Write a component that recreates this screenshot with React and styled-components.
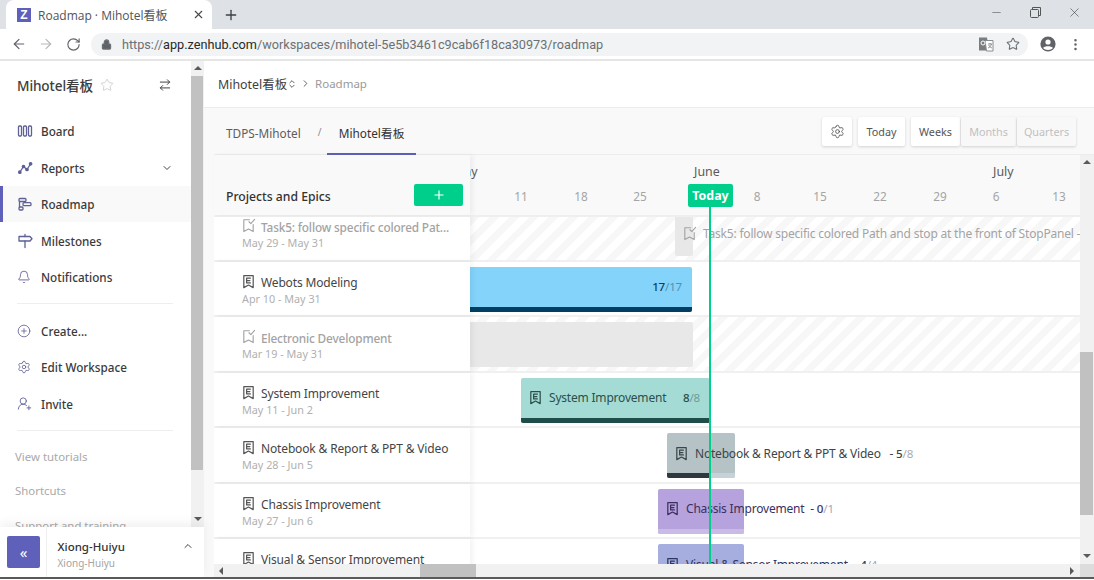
import React from "react";
import styled, { createGlobalStyle } from "styled-components";
import {
  ArrowLeft, ArrowRight, RotateCw, Lock, Star, MoreVertical, Plus, X, Settings,
  ChevronDown, ChevronUp, ChevronRight, ChevronsUpDown, ArrowRightLeft, Bell, CirclePlus,
  UserRoundPlus, Minus,
} from "lucide-react";

const SANS = `"Noto Sans", "Noto Sans CJK SC", sans-serif`;
const ACCENT = "#5e60ba";
const GREEN = "#00cf8c";

const Global = createGlobalStyle`
  html, body { margin: 0; padding: 0; background: #fff; }
  * { box-sizing: border-box; }
  body { font-family: ${SANS}; }
`;

const Win = styled.div`
  width: 1094px; height: 580px; display: flex; flex-direction: column; overflow: hidden; background: #fff;
`;

/* ---------- browser chrome ---------- */
const TabStrip = styled.div`
  height: 29px; flex: none; background: #dee1e6; display: flex; align-items: flex-end; padding-left: 6px;
`;
const BrowserTab = styled.div`
  width: 206px; height: 29px; background: #fff; border-radius: 8px 8px 0 0; display: flex; align-items: center;
  padding: 0 7px 0 11px; font: 12px "Open Sans", "Noto Sans CJK SC", sans-serif; color: #50545a;
`;
const Favicon = styled.span`
  width: 14px; height: 14px; background: ${ACCENT}; color: #fff; font: bold 12px/14px "Liberation Sans", sans-serif;
  text-align: center; margin-right: 7px; flex: none;
`;
const TabTitle = styled.span` flex: 1; white-space: nowrap; `;
const NewTab = styled.span` margin: 0 0 0 11px; height: 29px; display: flex; align-items: center; color: #3c4043; `;
const WinControls = styled.div`
  margin-left: auto; height: 29px; display: flex; align-items: center; color: #555; padding-bottom: 5px;
`;
const WinButton = styled.span`
  width: 39px; display: flex; justify-content: center;
`;
const Toolbar = styled.div`
  height: 32px; flex: none; background: #fff; border-bottom: 2px solid #e6e6e6; display: flex; align-items: center;
  padding: 0 10px 0 11px; color: #5f6368;
`;
const ToolButton = styled.span`
  width: 27.3px; display: flex; justify-content: flex-start; color: ${p => (p.$off ? "#b5b7ba" : "#5f6368")};
`;
const Omnibox = styled.div`
  width: 937px; height: 23px; margin-left: -2px; border-radius: 12px; background: #f1f3f4; display: flex; align-items: center;
  padding: 0 8px 0 10px; font: 12.7px Roboto, sans-serif; color: #6c7074; white-space: nowrap;
`;
const LockWrap = styled.span` display: flex; margin-left: 0; `;
const Host = styled.span` color: #26282b; `;
const Url = styled.span` flex: 1; margin-left: 10px; overflow: hidden; `;
const OmniIcon = styled.span` display: flex; margin-left: ${p => p.$gap || 0}px; `;
const Account = styled.span` margin-left: 12px; display: flex; color: #5f6368; `;
const Menu = styled.span` margin-left: 12px; display: flex; `;

/* ---------- body ---------- */
const Body = styled.div` flex: 1; min-height: 0; display: flex; `;
const Sidebar = styled.aside` width: 204px; flex: none; display: flex; flex-direction: column; position: relative; `;
const SideTop = styled.div` height: 466px; display: flex; `;
const SideScroll = styled.div` width: 191px; overflow: hidden; background: #fff; `;
const SideHead = styled.div`
  height: 52.2px; display: flex; align-items: center; padding: 0 19px 5px 17px; color: #3a3a3a;
`;
const WorkspaceName = styled.div` font-size: 13.6px; font-weight: 500; letter-spacing: -.1px; color: #3d3d3d; white-space: nowrap; `;
const StarWrap = styled.span` margin-left: 7px; display: flex; color: #c9c9c9; `;
const Swap = styled.span` margin-left: auto; display: flex; color: #444; `;
const NavItem = styled.div`
  height: 36.4px; display: flex; align-items: center; padding: 0 18px 0 14px; font-size: 11.7px; font-weight: 500; color: #3a3a3a;
  background: ${p => (p.$active ? "#f9f9f9" : "transparent")};
  border-left: 3px solid ${p => (p.$active ? ACCENT : "transparent")};
`;
const NavIcon = styled.span` width: 24px; flex: none; display: flex; color: #5e6096; `;
const NavChevron = styled.span` margin-left: auto; display: flex; color: #444; `;
const NavRule = styled.hr`
  border: 0; height: 1px; background: #eeeeee; margin: 8px 18px 8.5px 17px;
`;
const HelpRule = styled(NavRule)` margin-bottom: 8px; `;
const HelpLink = styled.div`
  height: 34.5px; display: flex; align-items: center; padding-left: 15px; font-size: 11.4px; color: #a9a9a9; white-space: nowrap;
`;
const Scrollbar = styled.div`
  width: ${p => p.$w || 13}px; flex: none; background: #f1f1f1; position: relative;
`;
const VThumb = styled.div`
  position: absolute; left: 0; right: ${p => p.$right || 0}px; top: ${p => p.$top}px; height: ${p => p.$h}px; background: #c1c1c1;
`;
const Arrow = styled.span`
  position: absolute; width: 0; height: 0;
  ${p => p.$dir === "up" && `border: 4px solid transparent; border-top: 0; border-bottom: 4px solid #5a5a5a; left: 2.5px; top: ${p.$at}px;`}
  ${p => p.$dir === "down" && `border: 4px solid transparent; border-bottom: 0; border-top: 4px solid #5a5a5a; left: 2.5px; top: ${p.$at}px;`}
  ${p => p.$dir === "left" && `border: 4px solid transparent; border-left: 0; border-right: 4px solid #5a5a5a; top: 2.5px; left: ${p.$at}px;`}
  ${p => p.$dir === "right" && `border: 4px solid transparent; border-right: 0; border-left: 4px solid #5a5a5a; top: 2.5px; left: ${p.$at}px;`}
`;
const UserBar = styled.div`
  height: 50px; background: #fff; display: flex; align-items: center; box-shadow: 0 -4px 10px rgba(0,0,0,.06); position: relative;
`;
const Collapse = styled.button`
  width: 33px; height: 32px; margin-left: 7px; border: 0; padding: 0; background: ${ACCENT}; color: #fff; border-radius: 2px;
  display: flex; align-items: center; justify-content: center; font: 15px/1 "Noto Sans", sans-serif;
`;
const UserInfo = styled.div`
  flex: 1; height: 50px; margin-left: 6px; padding: 11px 10px 0 10.5px; border-left: 1px solid #f0f0f0; display: flex;
`;
const UserName = styled.div` font-size: 11.5px; line-height: 18px; color: #333; font-weight: 500; `;
const UserSub = styled.div` font-size: 10px; line-height: 15px; color: #a5a5a5; `;
const UserChevron = styled.span` margin-left: auto; display: flex; color: #444; height: 12px; margin-top: 2px; `;

const Main = styled.main` flex: 1; min-width: 0; display: flex; flex-direction: column; background: #f9f9f9; `;
const Crumbs = styled.div`
  height: 47px; flex: none; background: #fff; border-bottom: 1px solid #ececec; display: flex; align-items: center; padding: 0 14px 1px;
  font-size: 12.4px; color: #3e3e3e;
`;
const CrumbMuted = styled.span` color: #9a9a9a; margin-left: 4px; font-size: 11.5px; `;
const CrumbIcon = styled.span` display: flex; color: #444; margin-left: ${p => p.$gap || 0}px; `;
const TabsBar = styled.div`
  height: 47px; flex: none; margin-left: 10px; display: flex; align-items: stretch; padding: 0 18px 0 12px; background: #f9f9f9;
  border-bottom: 1px solid #ececec;
`;
const ProjectTab = styled.div`
  display: flex; align-items: center; font-size: 11.8px; padding: 4px 0 0; white-space: nowrap; color: ${p => (p.$active ? "#333" : "#5c5c5c")};
  ${p => p.$active && `border-bottom: 2px solid ${ACCENT}; margin-bottom: -1px; padding: 4px 12px 0;`}
`;
const Slash = styled.span` align-self: center; width: 26px; padding: 2px 0 0 12px; text-align: center; color: #8a8a8a; font-size: 10px; `;
const TabTools = styled.div` margin-left: auto; display: flex; align-items: center; gap: 6px; `;
const ToolBtn = styled.button`
  height: 29px; width: ${p => p.$w}px; padding: 0; border: 0; border-radius: 2px; background: ${p => (p.$dim ? "#f8f8f8" : "#fff")};
  color: ${p => (p.$dim ? "#c0c0c0" : "#555")}; font: 10.8px ${SANS}; display: flex; align-items: center; justify-content: center;
  box-shadow: 0 1px 3px rgba(0,0,0,.16);
`;
const Segment = styled.div` display: flex; gap: 1px; `;

/* ---------- gantt ---------- */
const Gantt = styled.div` flex: 1; min-height: 0; margin-left: 10px; display: flex; `;
const Pane = styled.div` width: 866px; flex: none; display: flex; flex-direction: column; position: relative; `;
const GanttHead = styled.div` height: 62px; flex: none; display: flex; border-bottom: 2px solid #efefef; `;
const HeadLeft = styled.div`
  width: 256px; flex: none; display: flex; align-items: center; justify-content: space-between; padding: 23px 7px 0 12px;
  background: #f9f9f9; position: relative; z-index: 2; box-shadow: 3px 0 5px rgba(0,0,0,.05);
`;
const HeadTitle = styled.div` font-size: 12.2px; font-weight: 500; color: #333; `;
const AddBtn = styled.button`
  width: 49px; height: 22px; border: 0; border-radius: 2px; background: ${GREEN}; color: #fff; padding: 0;
  display: flex; align-items: center; justify-content: center; margin-top: -4px;
`;
const Axis = styled.div` flex: 1; position: relative; overflow: hidden; `;
const Month = styled.span`
  position: absolute; top: 8px; left: ${p => p.$x}px; font-size: 12.4px; color: #595959; line-height: 18px;
`;
const Day = styled.span`
  position: absolute; top: 32px; left: ${p => p.$x}px; transform: translateX(-50%); font-size: 11.8px; color: #a5a5a5; line-height: 18px;
`;
const RowsClip = styled.div` flex: 1; min-height: 0; overflow: hidden; `;
const Rows = styled.div` margin-top: -11px; `;
const Row = styled.div`
  height: 55.5px; display: flex; border-bottom: 2px solid #f0f0f0; background: #fff;
`;
const RowInfo = styled.div`
  width: 256px; flex: none; padding: 12px 0 0 28px; background: #fff; position: relative; z-index: 2; box-shadow: 3px 0 5px rgba(0,0,0,.05);
`;
const RowTitle = styled.div`
  display: flex; align-items: center; line-height: 18px; white-space: nowrap;
  font-size: ${p => (p.$closed ? "11.8px" : "12px")}; letter-spacing: -.15px;
  color: ${p => (p.$closed ? "#a3a3a3" : "#454545")}; font-weight: ${p => (p.$closed ? 500 : 400)};
`;
const RowIcon = styled.span` width: 20px; margin-left: -1px; flex: none; display: flex; color: ${p => (p.$closed ? "#a3a3a3" : "#555")}; margin-top: -3px; `;
const RowDate = styled.div` margin: -1px 0 0 0; font-size: 10.8px; line-height: 15px; color: #b0b0b0; `;
const Lane = styled.div`
  flex: 1; position: relative; overflow: hidden;
  ${p => p.$hatched && `background: repeating-linear-gradient(-45deg, #fff 0 7px, #f7f7f7 7px 14px);`}
`;
const Bar = styled.div`
  position: absolute; left: ${p => p.$x}px; width: ${p => p.$w}px; top: 5px; height: 45px; border-radius: 2px;
  background: ${p => p.$bg}; color: ${p => p.$fg}; display: flex; align-items: center;
  padding: 0 ${p => (p.$tail ? 10 : 0)}px ${p => (p.$track ? 5 : 0)}px 10px;
  font-size: 12px; letter-spacing: -.2px; white-space: nowrap;
`;
const BarIcon = styled.span` width: 18px; flex: none; display: flex; margin-left: -3px; & + * { margin-left: 3px; } `;
const BarCount = styled.span` ${p => p.$right && "margin-left: auto;"} font-size: 11.6px; font-weight: 500; white-space: pre; `;
const Of = styled.span` opacity: .45; font-weight: 400; `;
const BarLabel = styled.span` white-space: pre; `;
const Progress = styled.div`
  position: absolute; left: 0; right: 0; bottom: 0; height: 5px; background: ${p => p.$track}; border-radius: 0 0 2px 2px; overflow: hidden;
`;
const ProgressFill = styled.div` height: 100%; background: ${p => p.$fill}; `;
const TodayMark = styled.div`
  position: absolute; left: 495px; top: 52px; bottom: 13px; width: 2px; background: ${GREEN}; z-index: 3;
`;
const TodayChip = styled.div`
  position: absolute; left: -21px; top: -23px; width: 45px; height: 23px; background: ${GREEN}; color: #fff; border-radius: 2px;
  font-size: 12.4px; font-weight: 700; line-height: 23px; text-align: center;
`;
const HScroll = styled.div` height: 13px; flex: none; background: #f1f1f1; position: relative; z-index: 4; `;
const HThumb = styled.div` position: absolute; top: 0; bottom: 0; left: 206px; width: 56px; background: #c1c1c1; `;
const RightBar = styled.div` width: 14px; flex: none; display: flex; flex-direction: column; `;
const RightTrack = styled(Scrollbar)` width: 14px; flex: 1; `;
const Corner = styled.div` height: 13px; flex: none; background: #dcdcdc; `;
const BottomEdge = styled.div` height: 3px; flex: none; background: #fff; border-top: 2px solid #5a5a5a; `;

/* ---------- drawn icons ---------- */
const Svg = ({ size = 16, children, w = 1.3 }) => (
  <svg width={size} height={size} viewBox="0 0 16 16" fill="none" stroke="currentColor" strokeWidth={w} strokeLinecap="round" strokeLinejoin="round">
    {children}
  </svg>
);
const BoardIcon = () => (
  <Svg><rect x="1.5" y="3" width="3" height="10" rx="1" /><rect x="6.5" y="3" width="3" height="10" rx="1" /><rect x="11.5" y="3" width="3" height="10" rx="1" /></Svg>
);
const ReportsIcon = () => (
  <Svg>
    <path d="M3 12 L6.5 6.5 L10 9.5 L13.5 4" />
    <circle cx="2.8" cy="12.2" r="1.2" fill="currentColor" /><circle cx="6.5" cy="6.5" r="1.2" fill="currentColor" />
    <circle cx="10" cy="9.5" r="1.2" fill="currentColor" /><circle cx="13.6" cy="3.8" r="1.2" fill="currentColor" />
  </Svg>
);
const RoadmapIcon = () => (
  <Svg>
    <rect x="2" y="2.5" width="7" height="3" rx="1" /><rect x="6" y="6.7" width="8" height="3" rx="1" /><rect x="2" y="11" width="4" height="3" rx="1" />
    <path d="M2.5 5.5 V11" />
  </Svg>
);
const MilestoneIcon = () => (
  <Svg><path d="M2 3.5 H13 L15 5.7 L13 8 H2 Z" /><path d="M8 1.5 V3.5 M8 8 V14.5" /></Svg>
);
const BellIcon = () => <Bell size={14} strokeWidth={1.5} />;
const EpicIcon = ({ size = 15 }) => (
  <Svg size={size} w={1.3}>
    <path d="M3 1.8 H13 V14.5 L8 11.8 L3 14.5 Z" />
    <path d="M6 4.5 H10 M6 7 H9.5 M6 9.5 H10 M6 4.5 V9.5" />
  </Svg>
);
const ClosedEpicIcon = ({ size = 15 }) => (
  <Svg size={size} w={1.2}>
    <path d="M9 1.8 H3 V14.5 L8 11.8 L13 14.5 V7" />
    <path d="M8.5 4 L10.5 6 L14.5 1.5" />
  </Svg>
);
const TranslateIcon = () => (
  <svg width="16" height="16" viewBox="0 0 16 16">
    <path d="M1 1.5 H9 L11 14.5 H1 Z" fill="#7a7d80" />
    <path d="M7 4.5 H15 V15 H8.5 Z" fill="#fff" stroke="#8a8d90" />
    <circle cx="5" cy="7" r="2" fill="none" stroke="#fff" strokeWidth="1" />
    <path d="M10 8 H14 M12 7 V8 M13.5 8 C13 10 11.5 11.5 10 12 M10.8 9 C11.5 10.5 12.5 11.5 14 12" stroke="#777" strokeWidth=".8" fill="none" />
  </svg>
);
const AccountIcon = () => (
  <svg width="16" height="16" viewBox="0 0 16 16">
    <circle cx="8" cy="8" r="7.6" fill="#5f6368" />
    <circle cx="8" cy="6" r="2.6" fill="#fff" />
    <path d="M3 12 C4.5 9.8 11.5 9.8 13 12 C11 14.6 5 14.6 3 12 Z" fill="#fff" />
  </svg>
);
const RestoreIcon = () => (
  <svg width="11" height="11" viewBox="0 0 11 11" fill="none" stroke="#555" strokeWidth="1">
    <rect x=".5" y="2.5" width="8" height="8" rx="1" /><path d="M2.5 2.5 V.5 H10.5 V8.5 H8.5" />
  </svg>
);

const nav = [
  { label: "Board", icon: <BoardIcon /> },
  { label: "Reports", icon: <ReportsIcon />, chevron: true },
  { label: "Roadmap", icon: <RoadmapIcon />, active: true },
  { label: "Milestones", icon: <MilestoneIcon /> },
  { label: "Notifications", icon: <BellIcon /> },
];
const nav2 = [
  { label: "Create...", icon: <CirclePlus size={14} strokeWidth={1.4} /> },
  { label: "Edit Workspace", icon: <Settings size={14} strokeWidth={1.4} /> },
  { label: "Invite", icon: <UserRoundPlus size={15} strokeWidth={1.4} /> },
];

const months = [{ t: "May", x: -17 }, { t: "June", x: 224 }, { t: "July", x: 523 }];
const days = [["11", 51], ["18", 111], ["25", 170], ["8", 287], ["15", 350], ["22", 410], ["29", 470], ["6", 526], ["13", 589]];

const rows = [
  { title: "Task5: follow specific colored Pat...", date: "May 29 - May 31", closed: true, hatched: true,
    bar: { x: 205, w: 18, bg: "#e8e8e8", fg: "#a3a3a3", label: "Task5: follow specific colored Path and stop at the front of StopPanel - 2/2", icon: true } },
  { title: "Webots Modeling", date: "Apr 10 - May 31",
    bar: { x: -20, w: 242, bg: "#83d3fb", fg: "#123f58", count: [17, 17], right: true, tail: true, track: "#003f63", pct: 100 } },
  { title: "Electronic Development", date: "Mar 19 - May 31", closed: true, hatched: true,
    bar: { x: -20, w: 243, bg: "#e8e8e8", fg: "#999" } },
  { title: "System Improvement", date: "May 11 - Jun 2",
    bar: { x: 51, w: 189, bg: "#a4dcd5", fg: "#2c4f4b", label: "System Improvement", icon: true, count: [8, 8], right: true, tail: true, track: "#1f4d48", pct: 100 } },
  { title: "Notebook & Report & PPT & Video", date: "May 28 - Jun 5",
    bar: { x: 197, w: 68, bg: "#b5c3c7", fg: "#3b454a", label: "Notebook & Report & PPT & Video   - ", icon: true, count: [5, 8], track: "#c6d2d6", fill: "#2c3a40", pct: 63 } },
  { title: "Chassis Improvement", date: "May 27 - Jun 6",
    bar: { x: 188, w: 86, bg: "#b6a2dd", fg: "#3c2f5e", label: "Chassis Improvement  - ", icon: true, count: [0, 1], track: "#cabbe6", pct: 0 } },
  { title: "Visual & Sensor Improvement", date: "May 27 - Jun 6",
    bar: { x: 188, w: 86, bg: "#a5aede", fg: "#2f3560", label: "Visual & Sensor Improvement  - ", icon: true, count: [4, 4], track: "#c0c7e9", pct: 100, fill: "#2f3560" } },
];

export default function App() {
  return (
    <Win>
      <Global />
      <TabStrip>
        <BrowserTab>
          <Favicon>Z</Favicon>
          <TabTitle>Roadmap · Mihotel看板</TabTitle>
          <X size={13} strokeWidth={2} color="#45484c" />
        </BrowserTab>
        <NewTab><Plus size={16} strokeWidth={2} /></NewTab>
        <WinControls>
          <WinButton><Minus size={13} strokeWidth={1} color="#444" /></WinButton>
          <WinButton><RestoreIcon /></WinButton>
          <WinButton><X size={15} strokeWidth={1} color="#444" /></WinButton>
        </WinControls>
      </TabStrip>
      <Toolbar>
        <ToolButton><ArrowLeft size={16} strokeWidth={1.8} /></ToolButton>
        <ToolButton $off><ArrowRight size={16} strokeWidth={1.8} /></ToolButton>
        <ToolButton><RotateCw size={15} strokeWidth={1.8} /></ToolButton>
        <Omnibox>
          <LockWrap><Lock size={11} strokeWidth={2.4} fill="#5f6368" /></LockWrap>
          <Url>https://<Host>app.zenhub.com</Host>/workspaces/mihotel-5e5b3461c9cab6f18ca30973/roadmap</Url>
          <OmniIcon><TranslateIcon /></OmniIcon>
          <OmniIcon $gap={12}><Star size={14} strokeWidth={1.8} /></OmniIcon>
        </Omnibox>
        <Account><AccountIcon /></Account>
        <Menu><MoreVertical size={15} strokeWidth={2} /></Menu>
      </Toolbar>
      <Body>
        <Sidebar>
          <SideTop>
            <SideScroll>
              <SideHead>
                <WorkspaceName>Mihotel看板</WorkspaceName>
                <StarWrap><Star size={14} strokeWidth={1.4} /></StarWrap>
                <Swap><ArrowRightLeft size={14} strokeWidth={1.7} /></Swap>
              </SideHead>
              {nav.map(n => (
                <NavItem key={n.label} $active={n.active}>
                  <NavIcon>{n.icon}</NavIcon>{n.label}
                  {n.chevron && <NavChevron><ChevronDown size={12} strokeWidth={2} /></NavChevron>}
                </NavItem>
              ))}
              <NavRule />
              {nav2.map(n => (
                <NavItem key={n.label}><NavIcon>{n.icon}</NavIcon>{n.label}</NavItem>
              ))}
              <HelpRule />
              <HelpLink>View tutorials</HelpLink>
              <HelpLink>Shortcuts</HelpLink>
              <HelpLink>Support and training</HelpLink>
            </SideScroll>
            <Scrollbar>
              <Arrow $dir="up" $at={5} />
              <VThumb $top={15} $h={394} $right={1} />
              <Arrow $dir="down" $at={456} />
            </Scrollbar>
          </SideTop>
          <UserBar>
            <Collapse>«</Collapse>
            <UserInfo>
              <div>
                <UserName>Xiong-Huiyu</UserName>
                <UserSub>Xiong-Huiyu</UserSub>
              </div>
              <UserChevron><ChevronUp size={12} strokeWidth={2} /></UserChevron>
            </UserInfo>
          </UserBar>
        </Sidebar>
        <Main>
          <Crumbs>
            Mihotel看板
            <CrumbIcon><ChevronsUpDown size={10} strokeWidth={2} /></CrumbIcon>
            <CrumbIcon $gap={3}><ChevronRight size={11} strokeWidth={1.8} /></CrumbIcon>
            <CrumbMuted>Roadmap</CrumbMuted>
          </Crumbs>
          <TabsBar>
            <ProjectTab>TDPS-Mihotel</ProjectTab>
            <Slash>/</Slash>
            <ProjectTab $active>Mihotel看板</ProjectTab>
            <TabTools>
              <ToolBtn $w={30}><Settings size={15} strokeWidth={1.4} /></ToolBtn>
              <ToolBtn $w={47}>Today</ToolBtn>
              <Segment>
                <ToolBtn $w={49}>Weeks</ToolBtn>
                <ToolBtn $w={55} $dim>Months</ToolBtn>
                <ToolBtn $w={59} $dim>Quarters</ToolBtn>
              </Segment>
            </TabTools>
          </TabsBar>
          <Gantt>
            <Pane>
              <GanttHead>
                <HeadLeft>
                  <HeadTitle>Projects and Epics</HeadTitle>
                  <AddBtn><Plus size={14} strokeWidth={2} /></AddBtn>
                </HeadLeft>
                <Axis>
                  {months.map(m => <Month key={m.t} $x={m.x}>{m.t}</Month>)}
                  {days.map(([t, x]) => <Day key={x} $x={x}>{t}</Day>)}
                </Axis>
              </GanttHead>
              <RowsClip>
                <Rows>
                  {rows.map(r => {
                    const b = r.bar;
                    return (
                      <Row key={r.title}>
                        <RowInfo>
                          <RowTitle $closed={r.closed}>
                            <RowIcon $closed={r.closed}>{r.closed ? <ClosedEpicIcon /> : <EpicIcon />}</RowIcon>
                            {r.title}
                          </RowTitle>
                          <RowDate>{r.date}</RowDate>
                        </RowInfo>
                        <Lane $hatched={r.hatched}>
                          <Bar $x={b.x} $w={b.w} $bg={b.bg} $fg={b.fg} $tail={b.tail} $track={b.track}>
                            {b.icon && <BarIcon>{r.closed ? <ClosedEpicIcon /> : <EpicIcon />}</BarIcon>}
                            {b.label && <BarLabel>{b.label}</BarLabel>}
                            {b.count && <BarCount $right={b.right}>{b.count[0]}<Of>/{b.count[1]}</Of></BarCount>}
                            {b.track && (
                              <Progress $track={b.track}>
                                <ProgressFill $fill={b.fill || b.track} style={{ width: `${b.pct}%` }} />
                              </Progress>
                            )}
                          </Bar>
                        </Lane>
                      </Row>
                    );
                  })}
                </Rows>
              </RowsClip>
              <HScroll>
                <Arrow $dir="left" $at={5} />
                <HThumb />
                <Arrow $dir="right" $at={856} />
              </HScroll>
              <TodayMark><TodayChip>Today</TodayChip></TodayMark>
            </Pane>
            <RightBar>
              <RightTrack>
                <Arrow $dir="up" $at={5} />
                <VThumb $top={197} $h={163} $right={1} />
                <Arrow $dir="down" $at={399} />
              </RightTrack>
              <Corner />
            </RightBar>
          </Gantt>
        </Main>
      </Body>
      <BottomEdge />
    </Win>
  );
}
